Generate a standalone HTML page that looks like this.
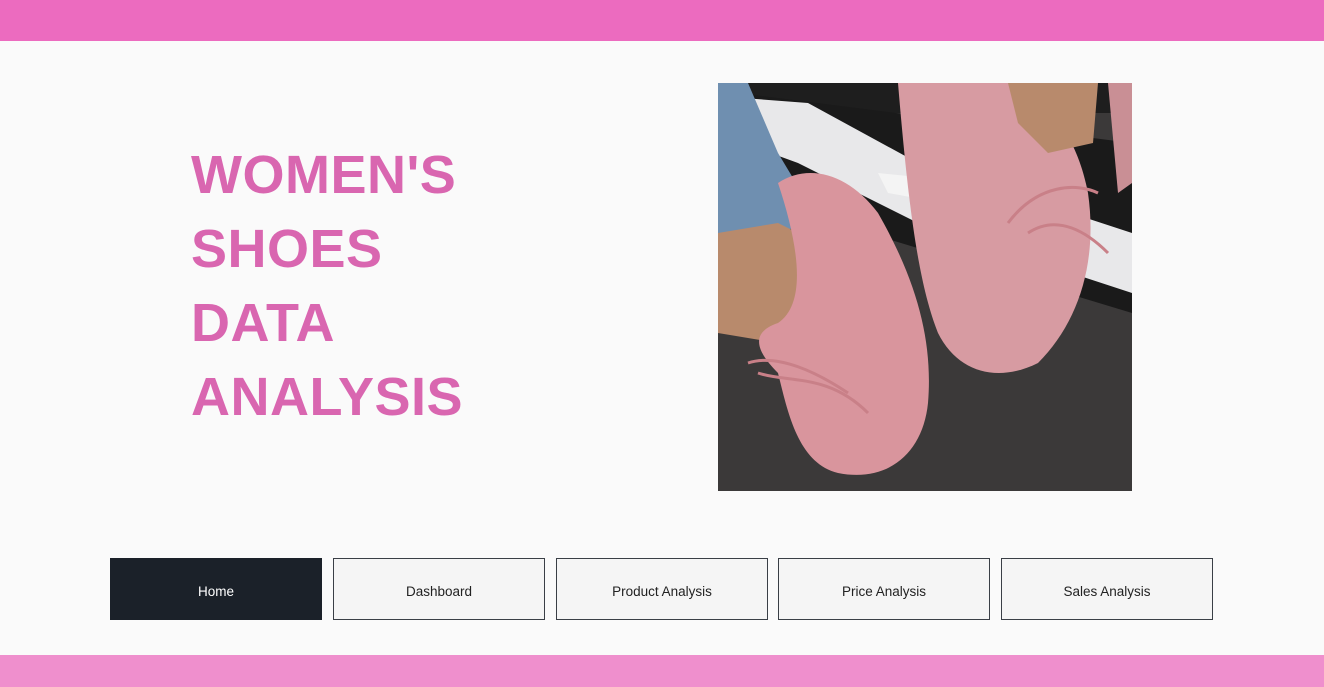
<!DOCTYPE html>
<html><head><meta charset="utf-8"><style>
html,body{margin:0;padding:0}
body{width:1324px;height:687px;background:#fafafa;position:relative;overflow:hidden;font-family:"Liberation Sans",sans-serif}
.top{position:absolute;left:0;top:0;width:1324px;height:41px;background:#ec6bbf}
.bot{position:absolute;left:0;top:655px;width:1324px;height:32px;background:#ef8fcd}
.title{position:absolute;left:191px;top:138px;color:#d966b0;font-weight:bold;font-size:54px;line-height:74px;letter-spacing:0.5px}
.btn{position:absolute;top:558px;width:210px;height:60px;border:1px solid #3a3f46;background:#f5f5f5;color:#222;font-size:13.5px;display:flex;align-items:center;justify-content:center;padding-top:4px;box-sizing:content-box;height:56px}
.btn.home{background:#1b2129;color:#fff;border-color:#1b2129}
.img{position:absolute;left:718px;top:83px;width:414px;height:408px}
</style></head><body>
<div class="top"></div>
<div class="title">WOMEN'S<br>SHOES<br>DATA<br>ANALYSIS</div>
<svg class="img" viewBox="0 0 414 408" xmlns="http://www.w3.org/2000/svg">
<rect width="414" height="408" fill="#3b3939"/>
<rect x="0" y="0" width="414" height="30" fill="#1e1e1e"/>
<path d="M20 10 L414 60 L414 230 L150 150 L20 90 Z" fill="#1a1a1a"/>
<path d="M25 15 L90 20 L200 80 L414 150 L414 210 L200 140 L80 80 L25 60 Z" fill="#e8e8ea"/>
<path d="M160 90 L260 100 L280 130 L170 110 Z" fill="#f4f4f4"/>
<path d="M0 0 L30 0 L60 70 L90 120 L70 150 L40 180 L0 170 Z" fill="#6f8fb0"/>
<path d="M0 150 L60 140 L100 160 L110 240 L60 260 L0 250 Z" fill="#b88a6c"/>
<path d="M60 100 C90 80 130 90 160 130 C200 200 215 260 210 320 C205 370 170 400 120 390 C80 380 70 330 60 290 C40 270 30 250 60 240 C90 220 80 160 60 100 Z" fill="#d9959d"/>
<path d="M180 0 L300 0 C340 30 360 60 370 110 C380 180 360 240 320 280 C280 300 240 290 220 250 C200 200 190 120 180 0 Z" fill="#d79ba2"/>
<path d="M290 0 L380 0 L375 60 L330 70 L300 40 Z" fill="#b88a6c"/>
<path d="M390 0 L414 0 L414 100 L400 110 Z" fill="#c98f95"/>
<path d="M30 280 C60 270 100 290 130 310 M40 290 C70 300 110 290 150 330" stroke="#c98088" stroke-width="3" fill="none"/>
<path d="M290 140 C320 100 360 100 380 110 M310 150 C340 130 370 150 390 170" stroke="#c98088" stroke-width="3" fill="none"/>
</svg>
<div class="btn home" style="left:110px">Home</div>
<div class="btn" style="left:333px">Dashboard</div>
<div class="btn" style="left:556px">Product Analysis</div>
<div class="btn" style="left:778px">Price Analysis</div>
<div class="btn" style="left:1001px">Sales Analysis</div>
<div class="bot"></div>
</body></html>
